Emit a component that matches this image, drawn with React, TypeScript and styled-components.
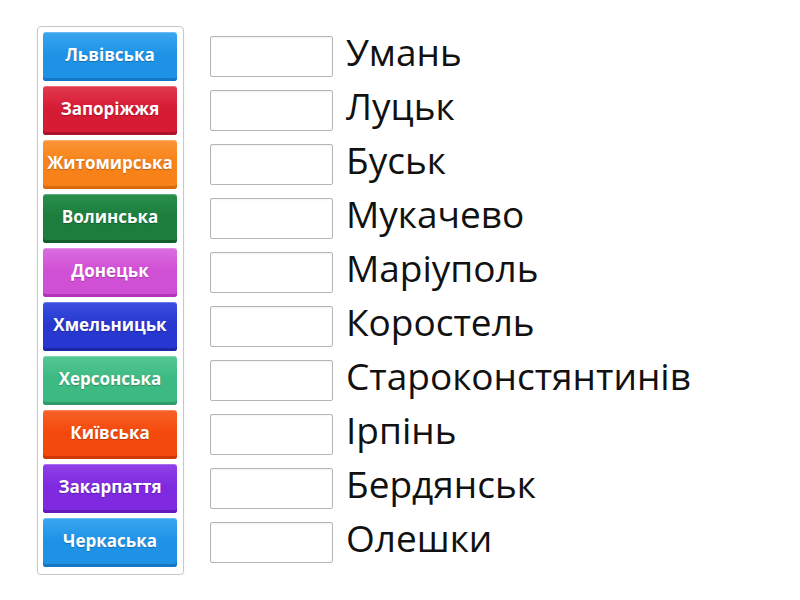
import React from "react";
import styled, { createGlobalStyle } from "styled-components";

const Global = createGlobalStyle`
  html, body { margin: 0; padding: 0; background: #fff; }
  body { font-family: "Open Sans", "Noto Sans", sans-serif; }
`;

const Page = styled.div`
  display: flex;
  align-items: flex-start;
  padding: 26px 0 0 37px;
  gap: 26px;
`;

const Tray = styled.div`
  display: flex;
  flex-direction: column;
  gap: 5px;
  width: 134px;
  padding: 5px 6px 7px 5px;
  border: 1px solid #c8c8c8;
  border-radius: 4px;
  box-shadow: 0 1px 2px rgba(0, 0, 0, 0.08);
`;

const Tile = styled.div<{ $c: string; $d: string; $l: string }>`
  height: 49px;
  box-sizing: border-box;
  display: flex;
  align-items: center;
  justify-content: center;
  border-radius: 3px;
  background: linear-gradient(to bottom, ${(p) => p.$l} 0%, ${(p) => p.$c} 45%, ${(p) => p.$c} 100%);
  box-shadow: inset 0 -3px 0 ${(p) => p.$d}, inset 0 1px 0 rgba(255,255,255,0.25);
  color: #fff;
  font-weight: 700;
  font-size: 17px;
  padding-bottom: 4px;
  text-shadow: 0 1px 1px rgba(0, 0, 0, 0.25);
  white-space: nowrap;
`;

const Targets = styled.div`
  display: flex;
  flex-direction: column;
  gap: 13px;
  padding-top: 10px;
`;

const Row = styled.div`
  display: flex;
  align-items: center;
  height: 41px;
  gap: 13px;
`;

const Slot = styled.div`
  width: 123px;
  height: 41px;
  box-sizing: border-box;
  border: 1px solid #b5b5b5;
  border-radius: 2px;
  background: #fff;
  box-shadow: inset 0 1px 2px rgba(0,0,0,0.05);
`;

const Label = styled.div`
  font-size: 37px;
  color: #111;
  line-height: 41px;
  margin-top: -10px;
  white-space: nowrap;
`;

const tiles = [
  { t: "Львівська", c: "#1e93e6", l: "#3aa6f0", d: "#1577c4" },
  { t: "Запоріжжя", c: "#d61b35", l: "#e23a4f", d: "#a9142a" },
  { t: "Житомирська", c: "#f7821a", l: "#fb9536", d: "#d86a0c" },
  { t: "Волинська", c: "#1c7d3c", l: "#2a8f4c", d: "#135f2c" },
  { t: "Донецьк", c: "#d050d5", l: "#da6ee0", d: "#b035b5" },
  { t: "Хмельницьк", c: "#2638d0", l: "#3b4fdf", d: "#1a28a8" },
  { t: "Херсонська", c: "#3dba83", l: "#55c794", d: "#2d9a69" },
  { t: "Київська", c: "#f4490c", l: "#f86228", d: "#cf3705" },
  { t: "Закарпаття", c: "#7f2ae0", l: "#9040e8", d: "#6419bf" },
  { t: "Черкаська", c: "#1e93e6", l: "#3aa6f0", d: "#1577c4" },
];

const labels = [
  "Умань",
  "Луцьк",
  "Буськ",
  "Мукачево",
  "Маріуполь",
  "Коростель",
  "Староконстянтинів",
  "Ірпінь",
  "Бердянськ",
  "Олешки",
];

export default function App() {
  return (
    <>
      <Global />
      <Page>
        <Tray>
          {tiles.map((x) => (
            <Tile key={x.t} $c={x.c} $l={x.l} $d={x.d}>
              {x.t}
            </Tile>
          ))}
        </Tray>
        <Targets>
          {labels.map((l) => (
            <Row key={l}>
              <Slot />
              <Label>{l}</Label>
            </Row>
          ))}
        </Targets>
      </Page>
    </>
  );
}
